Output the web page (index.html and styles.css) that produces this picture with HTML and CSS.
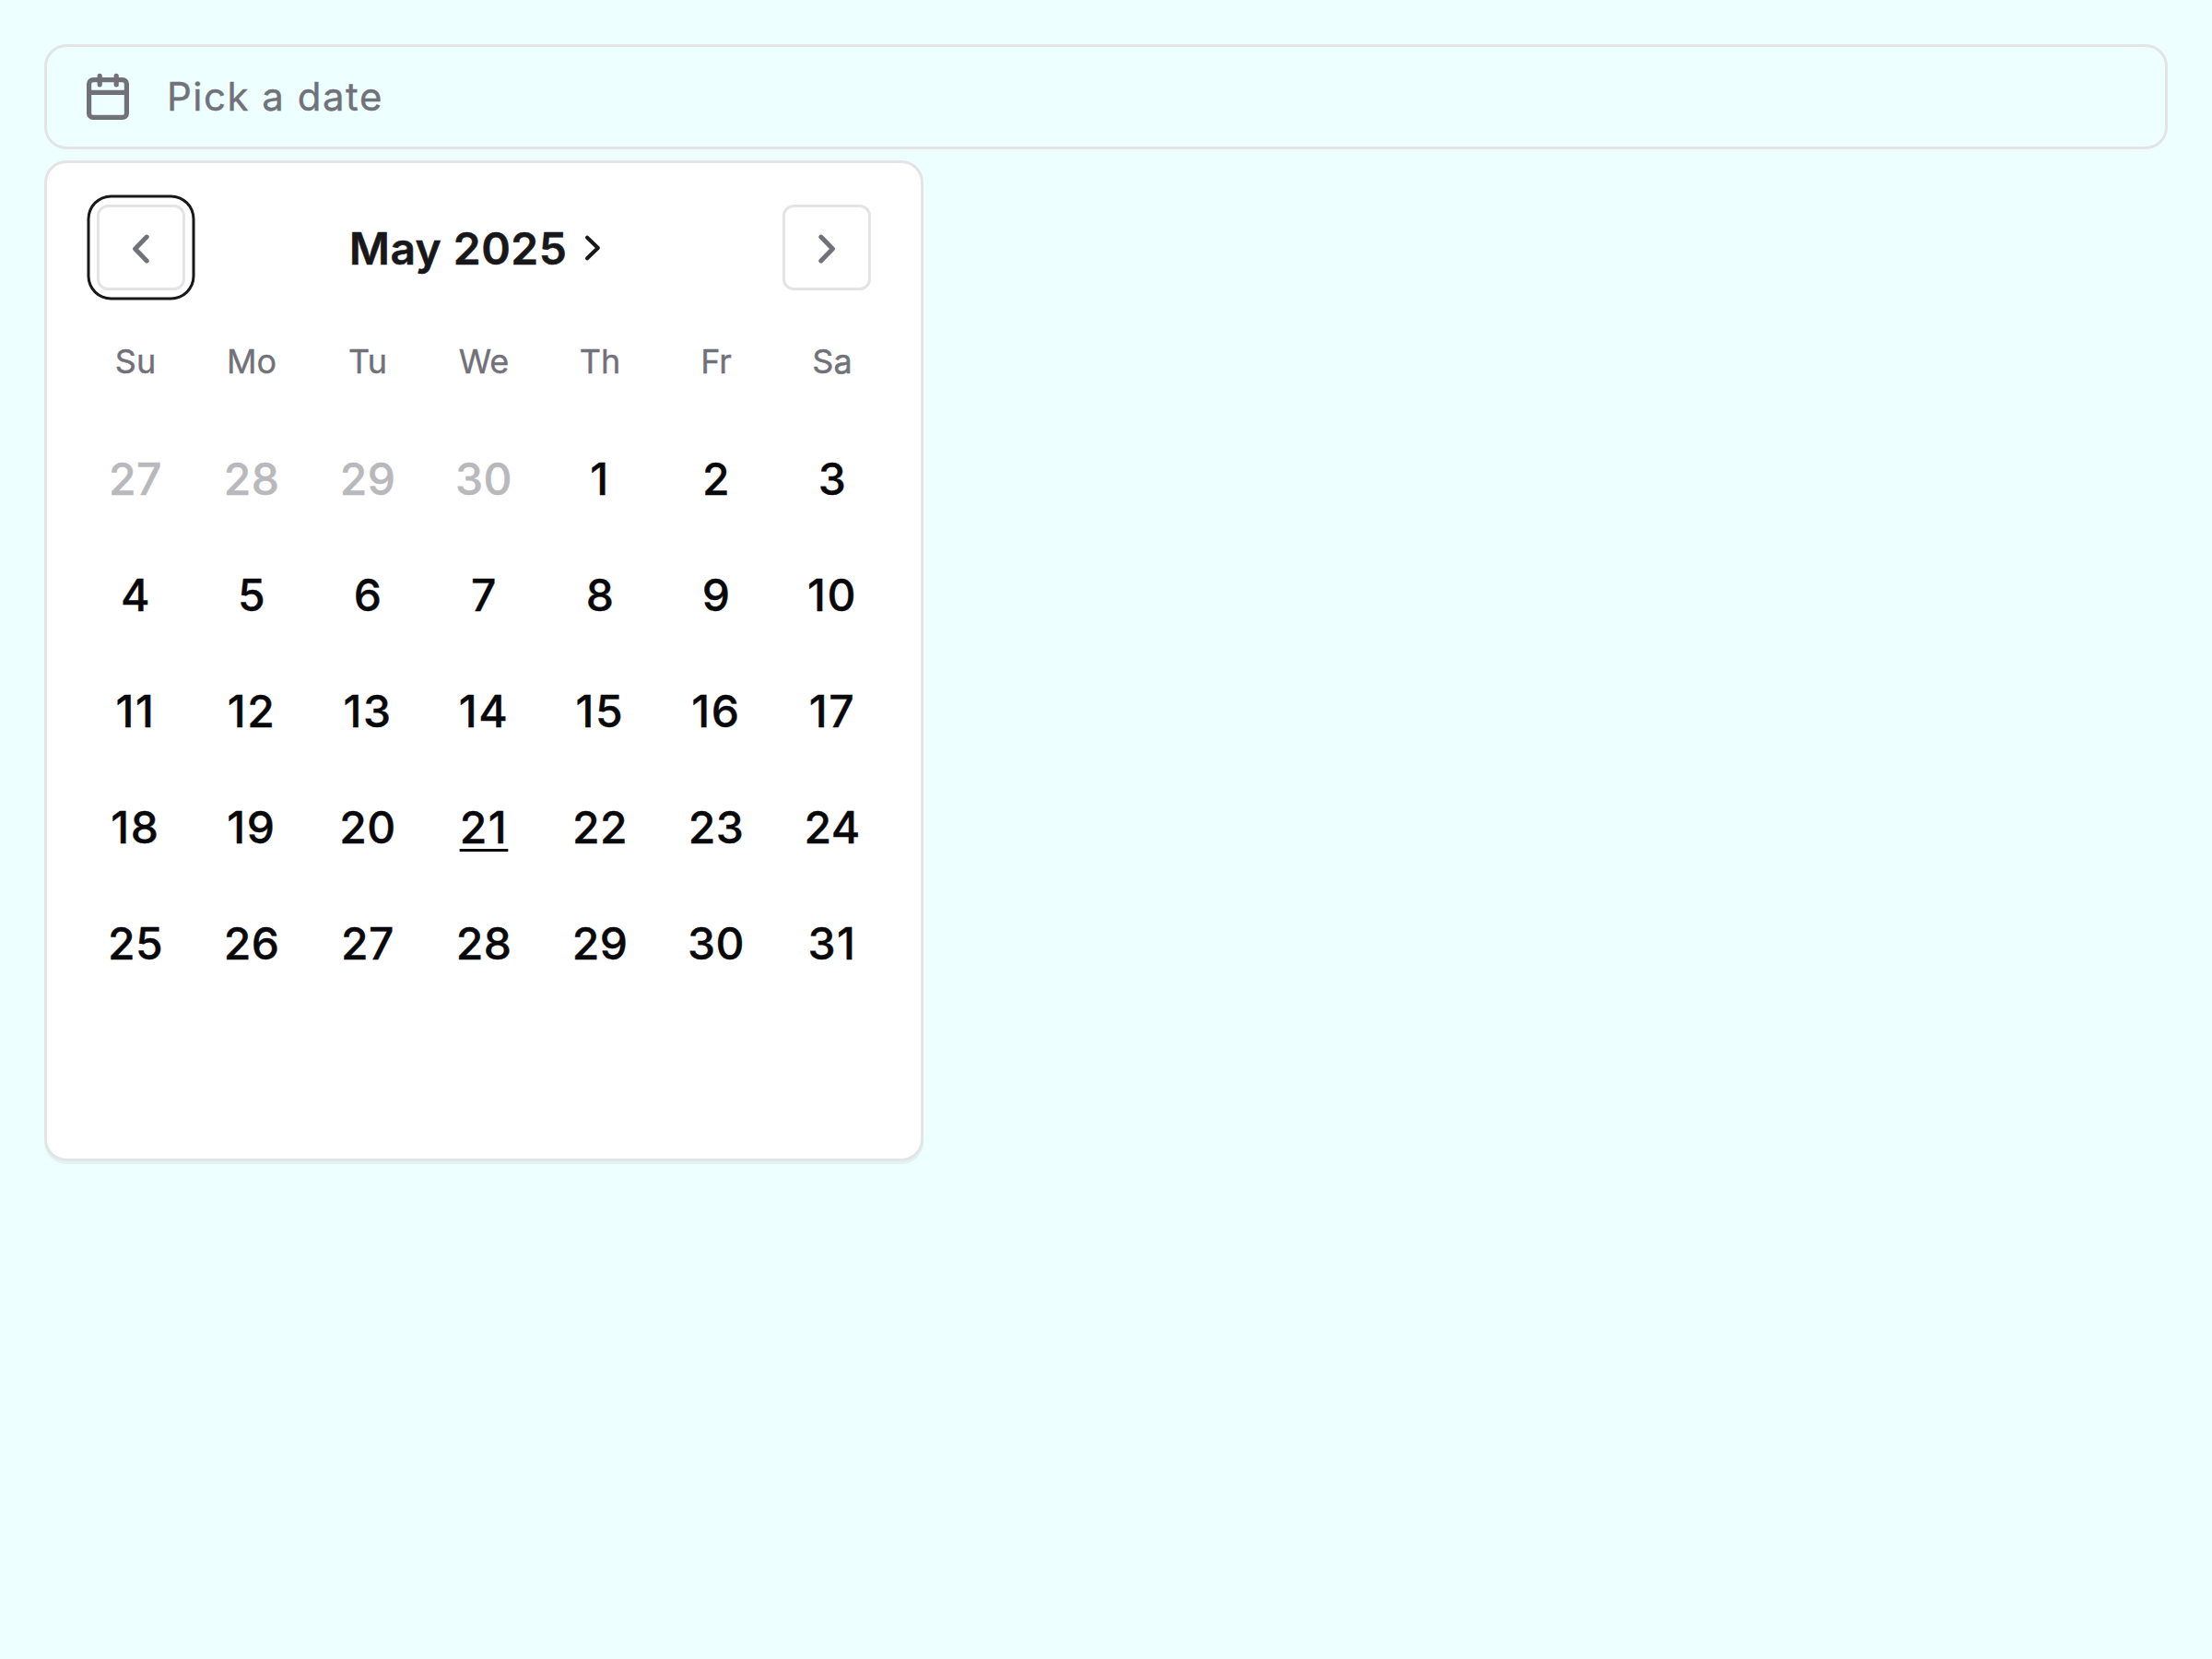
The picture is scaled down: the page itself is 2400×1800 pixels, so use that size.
FILE: index.html
```html
<!DOCTYPE html>
<html lang="en">
<head>
<meta charset="utf-8">
<title>Date picker</title>
<link rel="stylesheet" href="styles.css">
</head>
<body>
<main class="picker">
  <div class="field">
    <svg class="field-icon" width="54" height="54" viewBox="0 0 54 54" fill="none" stroke="currentColor" stroke-width="5.2" stroke-linecap="round">
      <rect x="6.6" y="8.6" width="40.8" height="40.8" rx="4.5"/>
      <path d="M6.6 22.4H47.4M18.2 4.3V13.8M36.2 4.3V13.8"/>
    </svg>
    <span class="placeholder">Pick a date</span>
  </div>
  <section class="calendar">
    <header class="calendar-header">
      <button class="nav nav-focused" aria-label="Previous"><svg width="54" height="54" viewBox="0 0 54 54"><path class="arrow" d="M33.2 14.1L20.6 27L33.2 39.9"/></svg></button>
      <button class="title"><span>May 2025</span><svg width="20" height="32" viewBox="0 0 20 32"><path class="caret" d="M4.1 4.8L15.8 16L4.1 27.2"/></svg></button>
      <button class="nav" aria-label="Next"><svg width="54" height="54" viewBox="0 0 54 54"><path class="arrow" d="M20.8 14.1L33.4 27L20.8 39.9"/></svg></button>
    </header>
    <div class="weekdays"><span>Su</span><span>Mo</span><span>Tu</span><span>We</span><span>Th</span><span>Fr</span><span>Sa</span></div>
    <div class="days">
      <span class="outside">27</span><span class="outside">28</span><span class="outside">29</span><span class="outside">30</span><span class="loose">1</span><span>2</span><span>3</span>
      <span>4</span><span>5</span><span>6</span><span>7</span><span>8</span><span>9</span><span class="loose">10</span>
      <span class="loose">11</span><span class="loose">12</span><span class="loose">13</span><span class="loose">14</span><span class="loose">15</span><span class="loose">16</span><span class="loose">17</span>
      <span class="loose">18</span><span class="loose">19</span><span>20</span><span class="loose today">21</span><span>22</span><span>23</span><span>24</span>
      <span>25</span><span>26</span><span>27</span><span>28</span><span>29</span><span>30</span><span class="loose">31</span>
    </div>
  </section>
</main>
</body>
</html>
```
FILE: styles.css
```css
* { box-sizing: border-box; }
body {
  margin: 0;
  min-height: 1800px;
  background: #edffff;
  font-family: Inter, "Liberation Sans", sans-serif;
  color: #09090b;
}
button { margin: 0; padding: 0; background: none; border: 0; font: inherit; color: inherit; }
svg { display: block; flex: none; }
.picker { display: flex; flex-direction: column; gap: 12px; padding: 48px; }
.field {
  display: flex;
  align-items: center;
  gap: 37px;
  height: 114px;
  padding: 0 39px;
  border: 3px solid #e4e4e7;
  border-radius: 24px;
  color: #71717a;
}
.placeholder { font-size: 42px; line-height: 60px; letter-spacing: 1.5px; -webkit-text-stroke: .4px; }
.calendar {
  width: 954px;
  height: 1086px;
  padding: 45px 33px 0;
  background: #fff;
  border: 3px solid #e4e4e7;
  border-radius: 24px;
  box-shadow: 0 3px 0 rgba(0, 0, 0, .05);
}
.calendar-header {
  position: relative;
  z-index: 0;
  display: flex;
  align-items: center;
  justify-content: space-between;
  height: 93px;
  padding: 0 21px;
}
.nav {
  position: relative;
  display: flex;
  align-items: center;
  justify-content: center;
  width: 96px;
  height: 93px;
  padding-top: 3px;
  border: 3px solid #e4e4e7;
  border-radius: 12px;
  color: #71717a;
}
.nav-focused::after {
  content: "";
  position: absolute;
  inset: -3px;
  border-radius: 15.5px;
  box-shadow: 0 0 0 7.5px #fff, 0 0 0 10.5px #18181b;
  z-index: -1;
}
.title { display: flex; align-items: center; gap: 18px; color: #18181b; font-size: 48px; font-weight: 600; line-height: 72px; letter-spacing: .45px; padding-right: 18px; }
.title span { padding-top: 2px; -webkit-text-stroke: .5px; }
.arrow, .caret { fill: none; stroke: currentColor; stroke-linecap: round; stroke-linejoin: round; }
.arrow { stroke-width: 5; }
.caret { stroke-width: 4.2; }
.weekdays, .days { display: grid; grid-template-columns: repeat(7, 126px); justify-items: center; align-items: center; }
.weekdays { height: 60px; margin-top: 47px; font-size: 36px; color: #71717a; -webkit-text-stroke: .4px; }
.days { grid-auto-rows: 126px; margin-top: 34px; font-size: 48px; font-weight: 500; letter-spacing: .4px; -webkit-text-stroke: .4px; }
.outside { color: #b8b8bd; }
.loose { letter-spacing: 1.6px; }
.today { text-decoration: underline; text-decoration-thickness: 3px; text-underline-offset: 6px; text-decoration-skip-ink: none; }
```
